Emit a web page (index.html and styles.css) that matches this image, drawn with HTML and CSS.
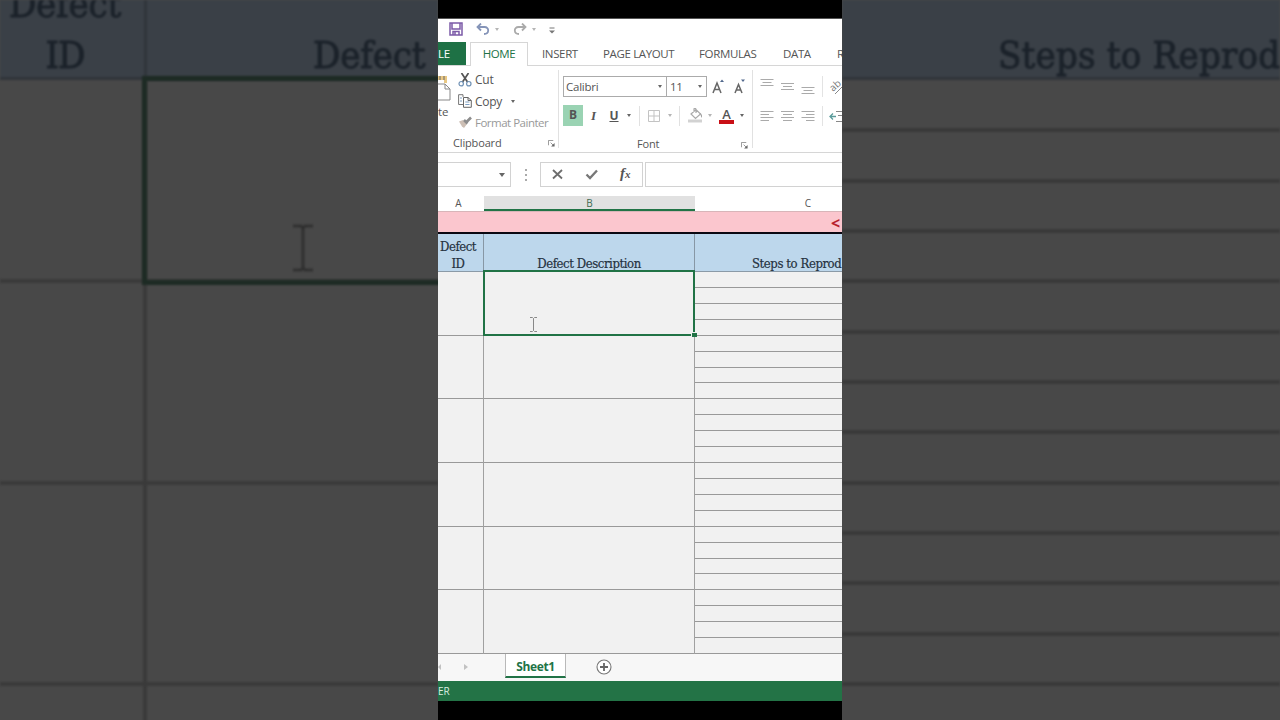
FILE: index.html
```html
<!DOCTYPE html>
<html lang="en">
<head>
<meta charset="utf-8">
<title>Defect sheet</title>
<link rel="stylesheet" href="styles.css">
</head>
<body>
<main class="stage">
  <section class="backdrop">
    <div class="bg-head bg-left-cols">
      <div class="bg-th bg-id"><span class="bg-defect">Defect</span><span class="bg-idtext">ID</span></div>
      <div class="bg-th bg-desc"><span class="bg-desctext">Defect</span></div>
    </div>
    <div class="bg-rows bg-left-cols">
      <div class="bg-td"></div><div class="bg-td"></div>
      <div class="bg-td"></div><div class="bg-td"></div>
      <div class="bg-td"></div><div class="bg-td"></div>
      <div class="bg-td"></div><div class="bg-td"></div>
    </div>
    <div class="bg-select"></div>
    <svg class="bg-cursor" viewBox="0 0 20 48"><path d="M0 2H8L10 4L12 2H20M10 4V44M0 46H8L10 44L12 46H20" fill="none" stroke="#2d2d2d" stroke-width="2.600"/></svg>
  </section>

  <section class="phone">
    <div class="bar-top"></div>
    <div class="qat">
      <svg class="q-save" viewBox="0 0 14 14"><path d="M1 1H13V13H1ZM3 1V7H11V1M4 13V9.500H10V13M6 10V13" fill="none" stroke="#7c5ba8" stroke-width="1.500"/></svg>
      <svg class="q-undo" viewBox="0 0 14 12"><path d="M5 .5L1.500 4L5 7.500M1.500 4H8.500C13.500 4 13.500 11 8 11" fill="none" stroke="#8594b8" stroke-width="1.800"/></svg>
      <i class="caret pale q-c1"></i>
      <svg class="q-redo" viewBox="0 0 14 12"><path d="M9 .5L12.500 4L9 7.500M12.500 4H5.500C.5 4 .5 11 6 11" fill="none" stroke="#aaa" stroke-width="1.800"/></svg>
      <i class="caret pale q-c2"></i>
      <svg class="q-more" viewBox="0 0 6 7"><path d="M.5 1H5.500" stroke="#777"/><path d="M0 3.500H6L3 6.500Z" fill="#777"/></svg>
    </div>
    <nav class="tabs">
      <span class="tab file">LE</span>
      <span class="tab home"><b class="t-home">HOME</b></span>
      <span class="tab t-insert">INSERT</span>
      <span class="tab t-page">PAGE LAYOUT</span>
      <span class="tab t-form">FORMULAS</span>
      <span class="tab t-data">DATA</span>
      <span class="tab t-rev">R</span>
    </nav>
    <div class="ribbon">
      <div class="group clip">
        <div class="clip-body">
          <div class="paste">
            <svg viewBox="0 0 14 28"><path d="M0 1H9V8H6V5H0Z" fill="#e9c884"/><path d="M2 1V5M6 1V5" stroke="#666" stroke-width="1"/><path d="M-1 9H7L12 14V25H-1M7 9V14H12" fill="#fff" stroke="#888"/></svg>
            <span>te</span>
          </div>
          <div class="cmds">
            <div class="cmd">
              <svg viewBox="0 0 14 14"><path d="M3.500 0L9.500 9M10.500 0L4.500 9" stroke="#555" stroke-width="1.700"/><circle cx="3.200" cy="10.700" r="2.200" fill="none" stroke="#6f91b5" stroke-width="1.200"/><circle cx="10.800" cy="10.700" r="2.200" fill="none" stroke="#6f91b5" stroke-width="1.200"/></svg>
              <span>Cut</span>
            </div>
            <div class="cmd">
              <svg viewBox="0 0 14 14"><path d="M5 3V.700H.600V10.500H5" fill="none" stroke="#777"/><path d="M5.500 3.500H10L13.300 6.500V13.300H5.500ZM10 3.500V6.500H13.300" fill="#fff" stroke="#666"/><path d="M7.300 8H11.500M7.300 10.500H11.500M2 4H4M2 7H4" stroke="#7e9fc2"/></svg>
              <span class="c-copy">Copy</span><i class="caret c-caret"></i>
            </div>
            <div class="cmd off">
              <svg viewBox="0 0 14 14"><path d="M1 5.500L5 4L9 8L6 12L4 10.500Z" fill="#cdbfb5"/><path d="M6 4L9.500 7.500M8.500 6L13 1.500" stroke="#8d8d8d" stroke-width="2.600"/></svg>
              <span class="c-fp">Format Painter</span>
            </div>
          </div>
        </div>
        <div class="glabel"><span class="gl-clip">Clipboard</span><svg class="launch" viewBox="0 0 8 8"><path d="M.5 6V.5H6M3 3L6 6" fill="none" stroke="#888"/><path d="M7.500 3.500V7.500H3.500Z" fill="#666"/></svg></div>
      </div>
      <div class="group font">
        <div class="font-row">
          <div class="box fname"><span>Calibri</span><i class="caret"></i></div>
          <div class="box fsize"><span>11</span><i class="caret"></i></div>
          <svg class="grow" viewBox="0 0 34 16"><path d="M1 15L5 5L9 15M2.500 11.500H7.500M23 15L26.500 6.500L30 15M24 12H29" fill="none" stroke="#666" stroke-width="1.500"/><path d="M8 4L10 1.500L12 4ZM29 1.500H33L31 4Z" fill="#51688c"/></svg>
        </div>
        <div class="font-row second">
          <span class="bold">B</span><span class="ital">I</span><span class="und">U</span><i class="caret"></i>
          <i class="sep s1"></i>
          <svg class="border-ic" viewBox="0 0 12 12"><path d="M.5 .5H11.500V11.500H.5ZM6 0V12M0 6H12" fill="none" stroke="#c3c3c3"/></svg>
          <i class="caret pale b-c"></i>
          <i class="sep s2"></i>
          <svg class="bucket" viewBox="0 0 15 15"><path d="M3 6L8 1.500L12.500 6L7.500 10.500ZM6 4V.8Q7.500-.5 8 1.500V5" fill="none" stroke="#aaa" stroke-width="1.200"/><path d="M12 5Q15 7 13.500 10Z" fill="#999"/><path d="M0 11.500H14V14.500H0Z" fill="#d2d2d2"/></svg>
          <i class="caret pale k-c"></i>
          <span class="fcolor">A</span>
          <i class="caret f-c"></i>
        </div>
        <div class="glabel"><span class="gl-font">Font</span><svg class="launch" viewBox="0 0 8 8"><path d="M.5 6V.5H6M3 3L6 6" fill="none" stroke="#888"/><path d="M7.500 3.500V7.500H3.500Z" fill="#666"/></svg></div>
      </div>
      <div class="group align">
        <svg viewBox="0 0 90 60"><path d="M8.500 7.500H21.500M10.500 10.500H19.500M8.500 13.500H21.500M29 11.500H42M31 14.500H40M29 17.500H42M49.500 15.500H62.500M51.500 18.500H60.500M49.500 21.500H62.500" stroke="#aaa"/><path d="M8.500 39.500H21.500M8.500 42.500H17M8.500 45.500H21.500M8.500 48.500H17M29 39.500H42M31 42.500H40M29 45.500H42M31 48.500H40M49.500 39.500H62.500M54 42.500H62.500M49.500 45.500H62.500M54 48.500H62.500" stroke="#aaa"/><path d="M70.500 4V25M70.500 34V54" stroke="#e3e3e3"/><text x="81" y="20" class="ab" transform="rotate(-42 81 20)">ab</text><path d="M83 22L94 11M84 39.500H92M86 43.500H92M84 49.500H92" stroke="#888"/><path d="M84 44.500H78M81 41.500L78 44.500L81 47.500" fill="none" stroke="#5a9b9a" stroke-width="1.300"/></svg>
      </div>
    </div>
    <div class="fbar">
      <div class="namebox"><i class="caret"></i></div>
      <div class="dots"><i></i><i></i><i></i></div>
      <div class="fbtns">
        <svg viewBox="0 0 102 24"><path d="M12 7L21 15.500M21 7L12 15.500" stroke="#6d6d6d" stroke-width="1.800"/><path d="M45.500 11.500L49 15L56 7.500" fill="none" stroke="#777" stroke-width="2.300"/></svg>
        <span class="fx">f<small>x</small></span>
      </div>
      <div class="finput"></div>
    </div>
    <div class="colhead"><span>A</span><span class="sel">B</span><span class="ch-c">C</span></div>
    <div class="pink"><span>&lt;</span></div>
    <div class="thead">
      <div class="th th-id">Defect<br>ID</div>
      <div class="th th-b"><span>Defect Description</span></div>
      <div class="th th-c"><span>Steps to Reprod</span></div>
    </div>
    <div class="sheet">
      <div class="col"><i></i><i></i><i></i><i></i><i></i><i></i></div>
      <div class="col"><i></i><i></i><i></i><i></i><i></i><i></i></div>
      <div class="col fine"><i></i><i></i><i></i><i></i><i></i><i></i><i></i><i></i><i></i><i></i><i></i><i></i><i></i><i></i><i></i><i></i><i></i><i></i><i></i><i></i><i></i><i></i><i></i><i></i></div>
      <div class="selection"><i class="handle"></i></div>
      <svg class="cursor" viewBox="0 0 7 15"><path d="M0 .5H2.500L3.500 1.500L4.500 .5H7M3.500 1.500V13.500M0 14.500H2.500L3.500 13.500L4.500 14.500H7" fill="none" stroke="#888"/></svg>
    </div>
    <div class="sheetbar">
      <svg class="arrows" viewBox="0 0 32 8"><path d="M3 1V7L0 4ZM26 1V7L30 4Z" fill="#c2c2c2"/></svg>
      <span class="stab"><b>Sheet1</b></span>
      <svg class="plus" viewBox="0 0 16 16"><circle cx="8" cy="8" r="7" fill="#fff" stroke="#777" stroke-width="1.100"/><path d="M8 4V12M4 8H12" stroke="#666" stroke-width="1.800"/></svg>
    </div>
    <div class="status">ER</div>
    <div class="bar-bottom"></div>
  </section>

  <section class="backdrop">
    <div class="bg-head bg-right"><span class="bg-steps">Steps to Reprod</span></div>
    <div class="bg-fine"><i></i><i></i><i></i><i></i><i></i><i></i><i></i><i></i><i></i><i></i><i></i><i></i><i></i></div>
  </section>
</main>
</body>
</html>
```
FILE: styles.css
```css
* { box-sizing: border-box; }
body { margin: 0; background: #000; }
i { font-style: normal; }
svg { display: block; flex: none; }
.stage { width: 1280px; height: 720px; display: grid; grid-template-columns: 438px 404px 438px; overflow: hidden; font-family: "Open Sans", "Noto Sans", sans-serif; color: #555; }

/* dimmed enlargement on both sides */
.backdrop { position: relative; overflow: hidden; height: 720px; background: #484848; font-family: "DejaVu Serif Condensed", "DejaVu Serif", serif; font-stretch: condensed; color: #1b222a; -webkit-text-stroke: .9px #1b222a; }
.bg-head { height: 80px; background: #3a4047; border-bottom: 3px solid #30343a; filter: blur(.9px); white-space: nowrap; }
.bg-left-cols { display: grid; grid-template-columns: 147px 291px; }
.bg-th { height: 77px; overflow: hidden; font-size: 38px; line-height: 51px; }
.bg-id { border-right: 3px solid #30353b; display: flex; flex-direction: column; align-items: center; padding-right: 14px; }
.bg-defect { margin-top: -21px; letter-spacing: -.2px; }
.bg-idtext { letter-spacing: -1px; }
.bg-desc { padding: 30px 0 0 166px; }
.bg-desctext { letter-spacing: -.2px; }
.bg-rows { grid-auto-rows: 201.400px; filter: blur(.8px); margin-top: 2px; }
.bg-td { border-bottom: 4px solid #3a3a3a; }
.bg-td:nth-child(odd) { border-right: 4px solid #3a3a3a; }
.bg-select { position: absolute; left: 142px; top: 76px; width: 310px; height: 209px; border: 5px solid #1d2b24; filter: blur(.9px); }
.bg-cursor { position: absolute; left: 293px; top: 224px; width: 20px; height: 48px; filter: blur(.8px); }
.bg-right { padding: 30px 0 0 156px; font-size: 38px; line-height: 51px; }
.bg-steps { letter-spacing: .2px; }
.bg-fine { display: grid; grid-auto-rows: 50.350px; filter: blur(.8px); margin-top: 2px; }
.bg-fine i { border-bottom: 4px solid #393939; }

.phone { display: flex; flex-direction: column; width: 404px; height: 720px; overflow: hidden; background: #fff; }
.phone > div, .tabs { flex: none; }
.bar-top { height: 19px; background: #000; border-bottom: 1px solid #555; }
.caret { width: 0; height: 0; flex: none; border: 2.500px solid transparent; border-top: 3px solid #666; border-bottom: 0; }
.caret.pale { border-top-color: #b5b5b5; }

.qat { height: 23px; display: flex; align-items: center; padding: 0 0 3px 11px; }
.q-save { width: 14px; height: 14px; }
.q-undo { width: 14px; height: 12px; margin-left: 13px; }
.q-c1 { margin-left: 5px; }
.q-redo { width: 14px; height: 12px; margin-left: 14px; }
.q-c2 { margin-left: 5px; }
.q-more { width: 6px; height: 7px; margin: 3px 0 0 13px; }

.tabs { height: 24px; display: flex; font-size: 11.500px; line-height: 24px; white-space: nowrap; border-bottom: 1px solid #d6d6d6; }
.tab { flex: none; letter-spacing: -.36px; }
.file { width: 28px; background: #1e7145; color: #fff; }
.home { width: 58px; height: 24px; margin-left: 4px; border: 1px solid #d6d6d6; border-bottom: 0; background: #fff; color: #217346; text-align: center; line-height: 22px; }
.t-home { font-weight: 400; }
.t-insert { margin-left: 14px; width: 61px; }
.t-page { width: 96px; }
.t-form { width: 84px; }
.t-data { width: 54px; }

.ribbon { height: 87px; display: flex; border-bottom: 1px solid #d6d6d6; }
.group { flex: none; position: relative; display: flex; flex-direction: column; }
.group::after { content: ""; position: absolute; right: 0; top: 4px; bottom: 4px; width: 1px; background: #e1e1e1; }
.clip { width: 121px; }
.clip-body { height: 70px; display: flex; }
.paste { width: 20px; padding-top: 9px; font-size: 11.500px; line-height: 15px; }
.paste svg { width: 14px; height: 28px; }
.paste span { display: block; margin-top: 1px; }
.cmds { padding-top: 3px; }
.cmd { height: 21.500px; display: flex; align-items: center; font-size: 12px; white-space: nowrap; letter-spacing: -.25px; }
.cmd svg { width: 14px; height: 14px; margin-right: 3px; }
.cmd.off { color: #999; }
.cmd .c-fp { letter-spacing: -.5px; font-size: 11.500px; }
.c-caret { margin-left: 9px; }
.glabel { height: 20px; display: flex; align-items: center; font-size: 11px; line-height: 20px; padding-bottom: 2px; letter-spacing: -.15px; }
.gl-clip { width: 94px; padding-left: 15px; }
.launch { width: 7px; height: 7px; margin: 2px 0 0 16px; }
.font { width: 194px; padding-left: 4px; }
.font-row { display: flex; align-items: center; height: 21px; margin-top: 10px; }
.box { height: 21px; border: 1px solid #ababab; display: flex; align-items: center; justify-content: space-between; padding: 0 3px 0 2px; font-size: 11.500px; letter-spacing: -.25px; }
.fname { width: 104px; padding-right: 4px; }
.fsize { width: 41px; margin-left: -1px; padding-right: 4px; padding-left: 3px; }
.grow { width: 34px; height: 16px; margin: -2px 0 0 5px; }
.second { margin-top: 8px; height: 22px; font-size: 12px; }
.second > * { flex: none; }
.bold { width: 20px; height: 21px; background: #9ad3b3; text-align: center; line-height: 20px; font-weight: 700; }
.ital { width: 21px; text-align: center; font: italic 700 13px "Liberation Serif", serif; }
.und { width: 20px; text-align: center; text-decoration: underline; font-weight: 700; }
.second > .caret { margin-left: 3px; }
.sep { width: 1px; height: 20px; background: #e1e1e1; }
.s1 { margin-left: 8px; }
.border-ic { width: 12px; height: 12px; margin-left: 8px; }
.second > .b-c { margin-left: 8px; }
.s2 { margin-left: 7px; }
.bucket { width: 15px; height: 15px; margin-left: 8px; }
.second > .k-c { margin-left: 5px; }
.fcolor { width: 15px; height: 15px; margin: 1px 0 0 7px; border-bottom: 4px solid #c90f16; text-align: center; font-size: 13px; font-weight: 600; line-height: 10px; }
.second > .f-c { margin-left: 6px; }
.font .glabel { margin-top: 9px; }
.gl-font { width: 162px; padding-left: 74px; }
.font .launch { margin-left: 16px; }
.align { width: 90px; }
.align svg { width: 90px; height: 60px; margin: 6px 0 0 -1px; }
.ab { font-size: 10px; fill: #777; }

.fbar { height: 43px; padding-top: 9px; display: flex; }
.fbar > * { height: 25px; flex: none; border: 1px solid #d2d2d2; }
.namebox { width: 73px; border-left: 0 !important; display: flex; align-items: center; justify-content: flex-end; padding-right: 5px; }
.namebox .caret { border-width: 4px 3.500px 0; }
.fbar > .dots { border: 0; width: 29px; display: flex; flex-direction: column; align-items: center; justify-content: center; gap: 3px; }
.dots i { width: 2px; height: 2px; background: #aaa; }
.fbtns { width: 103px; display: flex; }
.fbtns svg { width: 102px; height: 24px; margin-right: -23px; }
.fx { font: italic 700 15px/21px "Liberation Serif", serif; }
.fx small { font-size: 11px; }
.finput { width: 200px; margin-left: 2px; }

.colhead { height: 15px; display: grid; grid-template: 15px / 46px 211px 147px; font-size: 10px; line-height: 15px; text-align: center; }
.colhead span:first-child { padding-right: 5px; }
.sel { background: #e1e1e1; border-bottom: 2px solid #217346; color: #3f6b50; }
.ch-c { padding-left: 79px; }
.pink { height: 23px; background: #fbc6ce; border-top: 1px solid #d8b5b9; border-bottom: 2px solid #0b0812; color: #b81f2d; font-size: 16px; font-weight: 700; line-height: 22px; }
.pink span { padding-left: 393px; }
.thead { height: 38px; display: grid; grid-template-columns: 46px 211px 147px; background: #bdd7ec; border-bottom: 1px solid #8b9aa7; font-family: "DejaVu Serif Condensed", "DejaVu Serif", serif; font-stretch: condensed; font-size: 13px; line-height: 17px; color: #25323f; -webkit-text-stroke: .2px #25323f; }
.th { border-right: 1px solid #8797a5; white-space: nowrap; overflow: hidden; text-align: center; }
.th-id { padding: 4px 5px 0 0; letter-spacing: -.5px; }
.th-b { padding-top: 21px; letter-spacing: -.42px; }
.th-c { padding: 21px 0 0 57px; text-align: left; border: 0; letter-spacing: -.42px; }
.sheet { position: relative; height: 382px; display: grid; grid-template-columns: 46px 211px 147px; background: #f1f1f1; }
.col { display: grid; grid-template-rows: repeat(6, 1fr); border-right: 1px solid #a0a0a0; }
.col.fine { grid-template-rows: repeat(24, 1fr); border: 0; }
.col i { border-bottom: 1px solid #999; }
.selection { position: absolute; left: 45px; top: -2px; width: 212px; height: 66px; border: 2px solid #217346; }
.handle { position: absolute; right: -4px; bottom: -3px; width: 6px; height: 5px; background: #217346; border: solid #f1f1f1; border-width: 1px 0 0 1px; }
.cursor { position: absolute; left: 92px; top: 45px; width: 7px; height: 15px; }
.sheetbar { height: 27px; display: flex; background: #f7f7f7; }
.arrows { width: 32px; height: 8px; margin-top: 9px; }
.stab { width: 61px; height: 24px; margin-left: 35px; background: #fff; border: 1px solid #b9b9b9; border-top: 0; border-bottom: 2px solid #217346; color: #217346; text-align: center; font-size: 12px; line-height: 25px; }
.stab b { letter-spacing: -.4px; }
.plus { width: 16px; height: 16px; margin: 5px 0 0 30px; }
.status { height: 20px; background: #237346; color: #d9eee1; font-size: 10px; line-height: 20px; }
.bar-bottom { height: 19px; background: #000; }
```
